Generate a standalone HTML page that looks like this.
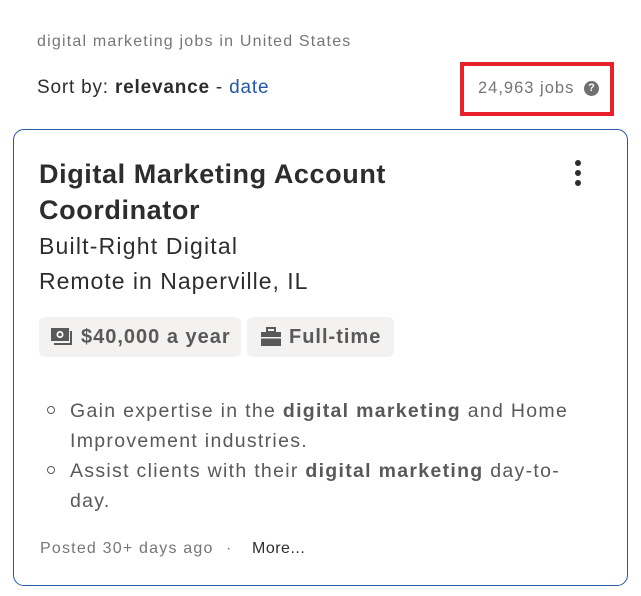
<!DOCTYPE html>
<html><head><meta charset="utf-8"><style>
body{margin:0;width:641px;height:596px;background:#fff;font-family:"Liberation Sans",sans-serif;position:relative;overflow:hidden;color:#2d2d2d}
.a{position:absolute;white-space:nowrap}
</style></head><body>
<div class="a" style="left:37px;top:33px;font-size:16px;letter-spacing:1.2px;color:#767676">digital marketing jobs in United States</div>
<div class="a" style="left:37px;top:77px;font-size:19px;letter-spacing:0.8px;color:#2d2d2d">Sort by: <b>relevance</b> - <span style="color:#2557a7">date</span></div>
<div class="a" style="left:460px;top:62px;width:146px;height:46px;border:4px solid #e8202a;"></div>
<div class="a" style="left:478px;top:79px;font-size:16.5px;letter-spacing:1px;color:#767676">24,963 jobs</div>
<div class="a" style="left:584px;top:81px;width:15px;height:15px;border-radius:50%;background:#6f6f6f;color:#fff;font-size:11px;font-weight:bold;text-align:center;line-height:15px">?</div>
<div class="a" style="left:13px;top:129px;width:613px;height:455px;border:1px solid #2557a7;border-radius:11px"></div>
<div class="a" style="left:39px;top:156px;font-size:27px;letter-spacing:0.6px;font-weight:bold;line-height:36px;color:#2d2d2d">Digital Marketing Account<br>Coordinator</div>
<div class="a" style="left:575px;top:160px;width:6px;height:6px;border-radius:50%;background:#2d2d2d;box-shadow:0 10px 0 #2d2d2d,0 20px 0 #2d2d2d"></div>
<div class="a" style="left:39px;top:231px;font-size:23px;letter-spacing:1.2px;line-height:30px">Built-Right Digital</div>
<div class="a" style="left:39px;top:266px;font-size:23px;letter-spacing:1px;line-height:30px">Remote in Naperville, IL</div>
<div class="a" style="left:39px;top:317px;width:202px;height:40px;background:#f3f2f1;border-radius:6px"></div>
<svg class="a" style="left:50px;top:327px" width="24" height="20" viewBox="0 0 24 20"><rect x="1" y="1" width="18" height="13" fill="#595959"/><circle cx="10" cy="7.5" r="3.5" fill="#fff"/><circle cx="10" cy="7.5" r="1.8" fill="#595959"/><path d="M21 4v13H4" stroke="#595959" stroke-width="2" fill="none"/></svg>
<div class="a" style="left:81px;top:326px;font-size:20px;letter-spacing:1px;font-weight:bold;color:#595959">$40,000 a year</div>
<div class="a" style="left:247px;top:317px;width:147px;height:40px;background:#f3f2f1;border-radius:6px"></div>
<svg class="a" style="left:260px;top:327px" width="22" height="20" viewBox="0 0 22 20"><rect x="7" y="1" width="8" height="4" fill="none" stroke="#595959" stroke-width="2"/><rect x="1" y="5" width="20" height="14" fill="#595959"/><rect x="1" y="10" width="20" height="1.5" fill="#f3f2f1"/></svg>
<div class="a" style="left:289px;top:326px;font-size:20px;letter-spacing:1px;font-weight:bold;color:#595959">Full-time</div>
<div style="position:absolute;left:70px;top:396px;width:510px;font-size:19.5px;letter-spacing:1.3px;line-height:30px;color:#595959">
Gain expertise in the <b>digital marketing</b> and Home Improvement industries.<br>
Assist clients with their <b>digital marketing</b> day-to-day.</div>
<div class="a" style="left:47px;top:406px;width:6px;height:6px;border:1px solid #595959;border-radius:50%"></div>
<div class="a" style="left:47px;top:466px;width:6px;height:6px;border:1px solid #595959;border-radius:50%"></div>
<div class="a" style="left:40px;top:540px;font-size:16px;letter-spacing:1.2px;color:#767676">Posted 30+ days ago</div>
<div class="a" style="left:226px;top:540px;font-size:16px;color:#767676">·</div>
<div class="a" style="left:252px;top:540px;font-size:16px;letter-spacing:0.5px;color:#2d2d2d">More...</div>
</body></html>
